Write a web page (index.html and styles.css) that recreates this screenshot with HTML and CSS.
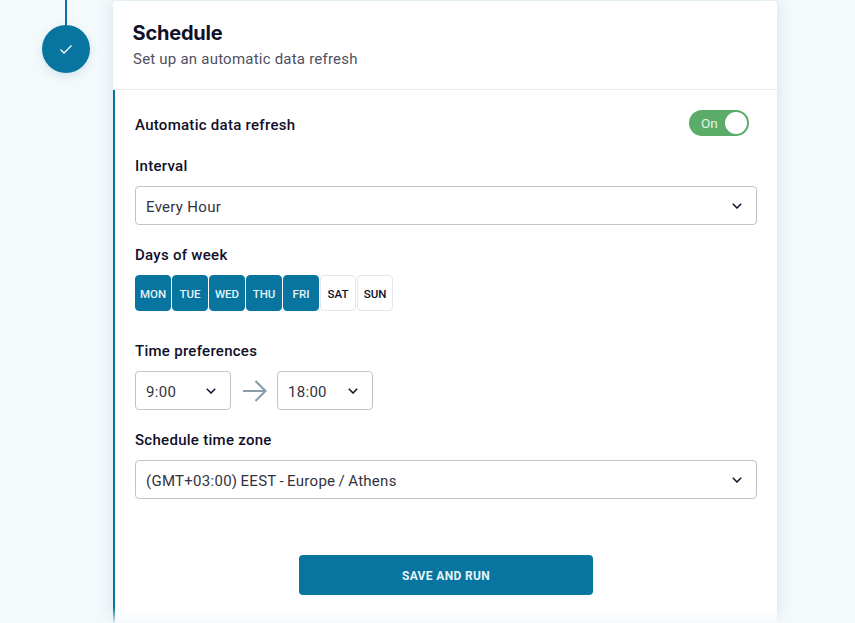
FILE: index.html
```html
<!DOCTYPE html>
<html lang="en">
<head>
<meta charset="utf-8">
<title>Schedule</title>
<link rel="stylesheet" href="styles.css">
</head>
<body>
<div class="page">
  <div class="rail">
    <div class="rail-line"></div>
    <div class="step">
      <svg width="14" height="14" viewBox="0 0 14 14" fill="none"><path d="M1.5 7.5 5 11 12.5 3.5" stroke="#fff" stroke-width="1.3"/></svg>
    </div>
  </div>
  <section class="card">
    <header class="card-head">
      <h1 class="title">Schedule</h1>
      <p class="subtitle">Set up an automatic data refresh</p>
    </header>
    <div class="card-body">
      <div class="auto-row">
        <span class="label auto-label">Automatic data refresh</span>
        <div class="toggle"><span class="toggle-text">On</span><span class="knob"></span></div>
      </div>
      <div class="label interval-label">Interval</div>
      <div class="select wide">
        <span>Every Hour</span>
        <svg class="chev" width="10" height="6" viewBox="0 0 10 6" fill="none"><path d="M.8.8 5 5 9.2.8" stroke="#10102a" stroke-width="1.5"/></svg>
      </div>
      <div class="label days-label">Days of week</div>
      <div class="days">
        <span class="day on">MON</span><span class="day on">TUE</span><span class="day on">WED</span><span class="day on">THU</span><span class="day on">FRI</span><span class="day">SAT</span><span class="day">SUN</span>
      </div>
      <div class="label time-label">Time preferences</div>
      <div class="times">
        <div class="select time">
          <span>9:00</span>
          <svg class="chev" width="10" height="6" viewBox="0 0 10 6" fill="none"><path d="M.8.8 5 5 9.2.8" stroke="#10102a" stroke-width="1.5"/></svg>
        </div>
        <svg class="arrow" width="24" height="22" viewBox="0 0 24 22" fill="none"><path d="M0 11H22.5M12.5 1 22.5 11 12.5 21" stroke="#8a9fab" stroke-width="2.2"/></svg>
        <div class="select time">
          <span>18:00</span>
          <svg class="chev" width="10" height="6" viewBox="0 0 10 6" fill="none"><path d="M.8.8 5 5 9.2.8" stroke="#10102a" stroke-width="1.5"/></svg>
        </div>
      </div>
      <div class="label zone-label">Schedule time zone</div>
      <div class="select wide">
        <span class="zone-text">(GMT+03:00) EEST - Europe / Athens</span>
        <svg class="chev" width="10" height="6" viewBox="0 0 10 6" fill="none"><path d="M.8.8 5 5 9.2.8" stroke="#10102a" stroke-width="1.5"/></svg>
      </div>
      <div class="actions"><button class="save">SAVE AND RUN</button></div>
    </div>
  </section>
  <div class="fade"></div>
</div>
</body>
</html>
```
FILE: styles.css
```css
* { box-sizing: border-box; }
html, body { margin: 0; height: 100%; }
body { background: #f4f9fb; font-family: Roboto, "Liberation Sans", sans-serif; color: #10102a; overflow: hidden; }
.page { position: relative; display: flex; height: 623px; overflow: hidden; padding-left: 42px; }
.rail { width: 48px; display: flex; flex-direction: column; align-items: center; flex: none; }
.rail-line { width: 2px; height: 25px; background: #07759f; }
.step { width: 48px; height: 48px; border-radius: 50%; background: #07759f; display: flex; align-items: center; justify-content: center; box-shadow: 0 3px 10px rgba(7,117,159,.14); }
.card { width: 664px; margin: 1px 0 0 23px; background: #fff; border-radius: 4px 4px 0 0; box-shadow: 0 0 16px rgba(7,117,159,.16); flex: none; height: 640px; }
.card-head { height: 89px; padding: 21px 19px 0 20px; border-bottom: 1px solid #e9edf0; }
.title { margin: 0 0 0 -.5px; font-family: Inter, sans-serif; font-size: 20px; line-height: 23px; font-weight: 700; letter-spacing: -.2px; }
.subtitle { margin: 5px 0 0; font-size: 15px; line-height: 18px; color: #50505f; letter-spacing: .22px; }
.card-body { border-left: 2px solid #07759f; padding: 20px 20px 0; height: 551px; }
.label { font-size: 15px; line-height: 20px; font-weight: 500; letter-spacing: .28px; }
.auto-row { display: flex; align-items: center; justify-content: space-between; height: 26px; padding-right: 8px; }
.auto-label { padding-top: 4px; }
.toggle { width: 60px; height: 26px; border-radius: 13px; background: #5aac68; display: flex; align-items: center; justify-content: space-between; padding: 0 2px 0 12px; }
.toggle-text { font-size: 13.5px; color: #e4f4ea; }
.knob { width: 22px; height: 22px; border-radius: 50%; background: #fff; }
.interval-label { margin-top: 20px; }
.select { height: 39px; border: 1px solid #c4c4c4; border-radius: 4px; background: #fff; display: flex; align-items: center; justify-content: space-between; font-size: 15px; color: #33333f; letter-spacing: .3px; }
.select span { padding-top: 2px; }
.wide { width: 622px; margin-top: 10px; padding: 0 14px 0 10px; }
.zone-text { word-spacing: -.8px; letter-spacing: .28px; }
.days-label { margin-top: 20px; }
.days { display: flex; gap: 1px; margin-top: 10px; }
.day { width: 36px; height: 36px; padding-top: 2px; border: 1px solid #e1e7ea; border-radius: 4px; display: flex; align-items: center; justify-content: center; font-size: 11.5px; font-weight: 500; }
.day.on { background: #07759f; border-color: #07759f; color: #e6f3f8; }
.time-label { margin-top: 30px; }
.times { display: flex; align-items: center; margin-top: 10px; }
.time { width: 96px; padding: 0 14px 0 10px; }
.arrow { margin: 0 10px 0 12px; }
.zone-label { margin-top: 20px; }
.actions { display: flex; justify-content: center; margin-top: 56px; }
.save { width: 294px; height: 40px; padding-top: 2px; border: 0; border-radius: 4px; background: #07759f; color: #e6f3f8; font-family: Roboto, sans-serif; font-size: 12px; font-weight: 700; letter-spacing: .35px; }
.fade { position: absolute; left: 0; right: 0; bottom: 0; height: 16px; background: linear-gradient(rgba(244,249,251,0), rgba(244,249,251,.9)); }
```
